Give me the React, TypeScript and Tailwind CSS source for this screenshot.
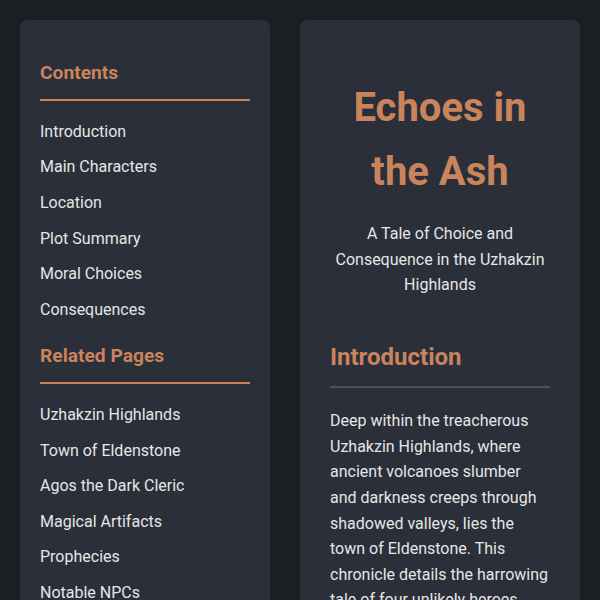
const contents = [
  "Introduction",
  "Main Characters",
  "Location",
  "Plot Summary",
  "Moral Choices",
  "Consequences",
];

const related = [
  "Uzhakzin Highlands",
  "Town of Eldenstone",
  "Agos the Dark Cleric",
  "Magical Artifacts",
  "Prophecies",
  "Notable NPCs",
  "Ancient Ruins",
];

function SideSection({ title, items }: { title: string; items: string[] }) {
  return (
    <div className="mb-[14px]">
      <h2 className="mb-[13px] border-b-2 border-[#c9845b] pb-[10px] text-[19.2px] font-bold leading-[1.6] text-[#c9845b]">
        {title}
      </h2>
      <ul>
        {items.map((item) => (
          <li key={item} className="py-[5px] leading-[1.6]">
            <a href="#" className="text-[#e6e6e6]">
              {item}
            </a>
          </li>
        ))}
      </ul>
    </div>
  );
}

export default function App() {
  return (
    <main
      className="flex min-h-screen items-start gap-[30px] bg-[#1b1e23] p-5 text-[#e6e6e6]"
      style={{ fontFamily: "Roboto, 'Noto Sans', sans-serif" }}
    >
      <aside className="w-[250px] shrink-0 rounded-lg bg-[#2a2f3a] px-5 pb-5 pt-[38px]">
        <SideSection title="Contents" items={contents} />
        <SideSection title="Related Pages" items={related} />
      </aside>

      <article className="w-[280px] shrink-0 rounded-lg bg-[#2a2f3a] px-[30px] pb-[30px] pt-[56px]">
        <header className="text-center">
          <h1 className="text-[40px] font-bold leading-[1.6] text-[#c9845b]">
            Echoes in the Ash
          </h1>
          <p className="mt-[17px] leading-[1.6]">
            A Tale of Choice and Consequence in the Uzhakzin Highlands
          </p>
        </header>

        <section className="mt-10">
          <h2 className="border-b-2 border-[#4a5262] pb-[10px] text-2xl font-bold leading-[1.6] text-[#c9845b]">
            Introduction
          </h2>
          <p className="mt-5 leading-[1.6]">
            Deep within the treacherous Uzhakzin Highlands, where ancient
            volcanoes slumber and darkness creeps through shadowed valleys, lies
            the town of Eldenstone. This chronicle details the harrowing tale of
            four unlikely heroes whose choices would shape the fate of the
            realm.
          </p>
        </section>
      </article>
    </main>
  );
}
